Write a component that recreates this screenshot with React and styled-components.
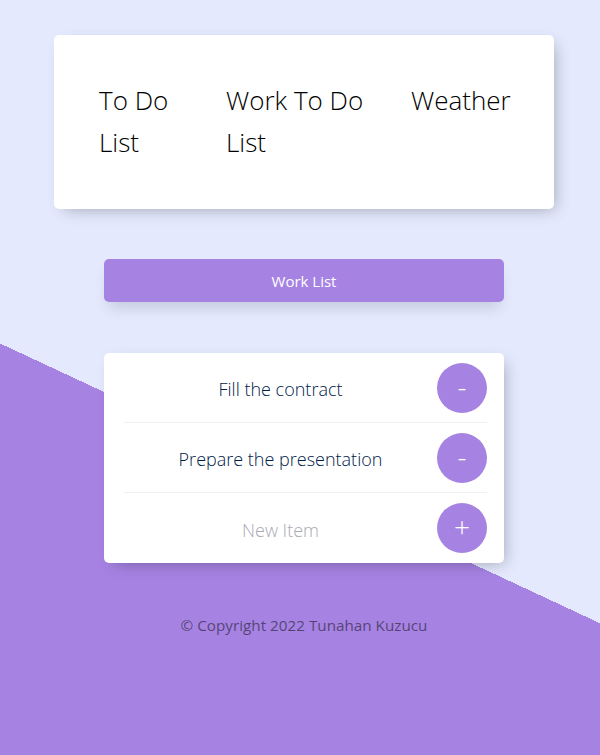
import React from "react";
import styled, { createGlobalStyle } from "styled-components";

const GlobalStyle = createGlobalStyle`
  html, body {
    margin: 0;
    padding: 0;
  }
  body {
    font-family: "Open Sans", "Noto Sans", sans-serif;
    background-color: #e4e9fd;
  }
`;

const Page = styled.div`
  height: 755px;
  box-sizing: border-box;
  padding: 35px 0 0 8px;
  background-color: #e4e9fd;
  background-image: linear-gradient(25deg, #a683e3 373px, #e4e9fd 373px);
  overflow: hidden;
`;

const NavCard = styled.nav`
  width: 500px;
  margin: 0 auto;
  box-sizing: border-box;
  padding: 44px 45px 46px;
  background: #fff;
  border-radius: 5px;
  box-shadow: 5px 5px 15px -5px rgba(0, 0, 0, 0.3);
  display: flex;
  align-items: flex-start;
`;

const NavLink = styled.a`
  display: block;
  box-sizing: border-box;
  width: ${(p) => p.$width}px;
  padding-right: ${(p) => p.$gap}px;
  flex-shrink: 0;
  font-size: 26px;
  line-height: 42px;
  font-weight: 300;
  color: #000;
  text-decoration: none;
  cursor: pointer;
`;

const ListButton = styled.button`
  display: block;
  width: 400px;
  height: 43px;
  margin: 50px auto 0;
  border: 0;
  border-radius: 5px;
  background-color: #a683e3;
  color: #fff;
  font-family: "Open Sans", "Noto Sans", sans-serif;
  font-size: 15px;
  box-shadow: 0 10px 15px -5px rgba(0, 0, 0, 0.15);
  cursor: pointer;
`;

const Box = styled.div`
  width: 400px;
  margin: 51px auto 0;
  background: #fff;
  border-radius: 5px;
  box-shadow: 5px 5px 15px -5px rgba(0, 0, 0, 0.3);
`;

const Item = styled.form`
  display: flex;
  align-items: center;
  box-sizing: border-box;
  min-height: 70px;
  margin: 0 17px 0 20px;
  border-bottom: 1px solid ${(p) => (p.$last ? "transparent" : "#f1f1f1")};
`;

const ItemText = styled.p`
  flex: 1;
  margin: 0;
  padding-top: 2px;
  text-align: center;
  font-size: 18px;
  font-weight: 300;
  color: #00204a;
`;

const NewInput = styled.input`
  flex: 1;
  min-width: 0;
  height: 60px;
  padding: 4px 0 0;
  border: none;
  outline: none;
  text-align: center;
  font-family: "Open Sans", "Noto Sans", sans-serif;
  font-size: 18px;
  font-weight: 300;
  color: #00204a;
  background: transparent;

  &::placeholder {
    color: #a9a9b4;
  }
`;

const RoundButton = styled.button`
  width: 50px;
  height: 50px;
  flex-shrink: 0;
  border: 0;
  border-radius: 50%;
  background-color: #a683e3;
  color: #fff;
  font-family: "Open Sans", "Noto Sans", sans-serif;
  font-size: 28px;
  font-weight: 300;
  line-height: 1;
  padding: 0 0 4px;
  cursor: pointer;
`;

const Footer = styled.footer`
  margin-top: 52px;
  text-align: center;
  font-size: 15.25px;
  color: rgba(0, 0, 0, 0.5);
`;

const items = ["Fill the contract", "Prepare the presentation"];

export default function App() {
  return (
    <Page>
      <GlobalStyle />
      <NavCard>
        <NavLink $width={127} $gap={27}>To Do List</NavLink>
        <NavLink $width={185} $gap={30}>Work To Do List</NavLink>
        <NavLink $width={110} $gap={0}>Weather</NavLink>
      </NavCard>

      <ListButton>Work List</ListButton>

      <Box>
        {items.map((text) => (
          <Item key={text} onSubmit={(e) => e.preventDefault()}>
            <ItemText>{text}</ItemText>
            <RoundButton type="button">-</RoundButton>
          </Item>
        ))}
        <Item $last onSubmit={(e) => e.preventDefault()}>
          <NewInput type="text" placeholder="New Item" />
          <RoundButton type="submit">+</RoundButton>
        </Item>
      </Box>

      <Footer>© Copyright 2022 Tunahan Kuzucu</Footer>
    </Page>
  );
}
